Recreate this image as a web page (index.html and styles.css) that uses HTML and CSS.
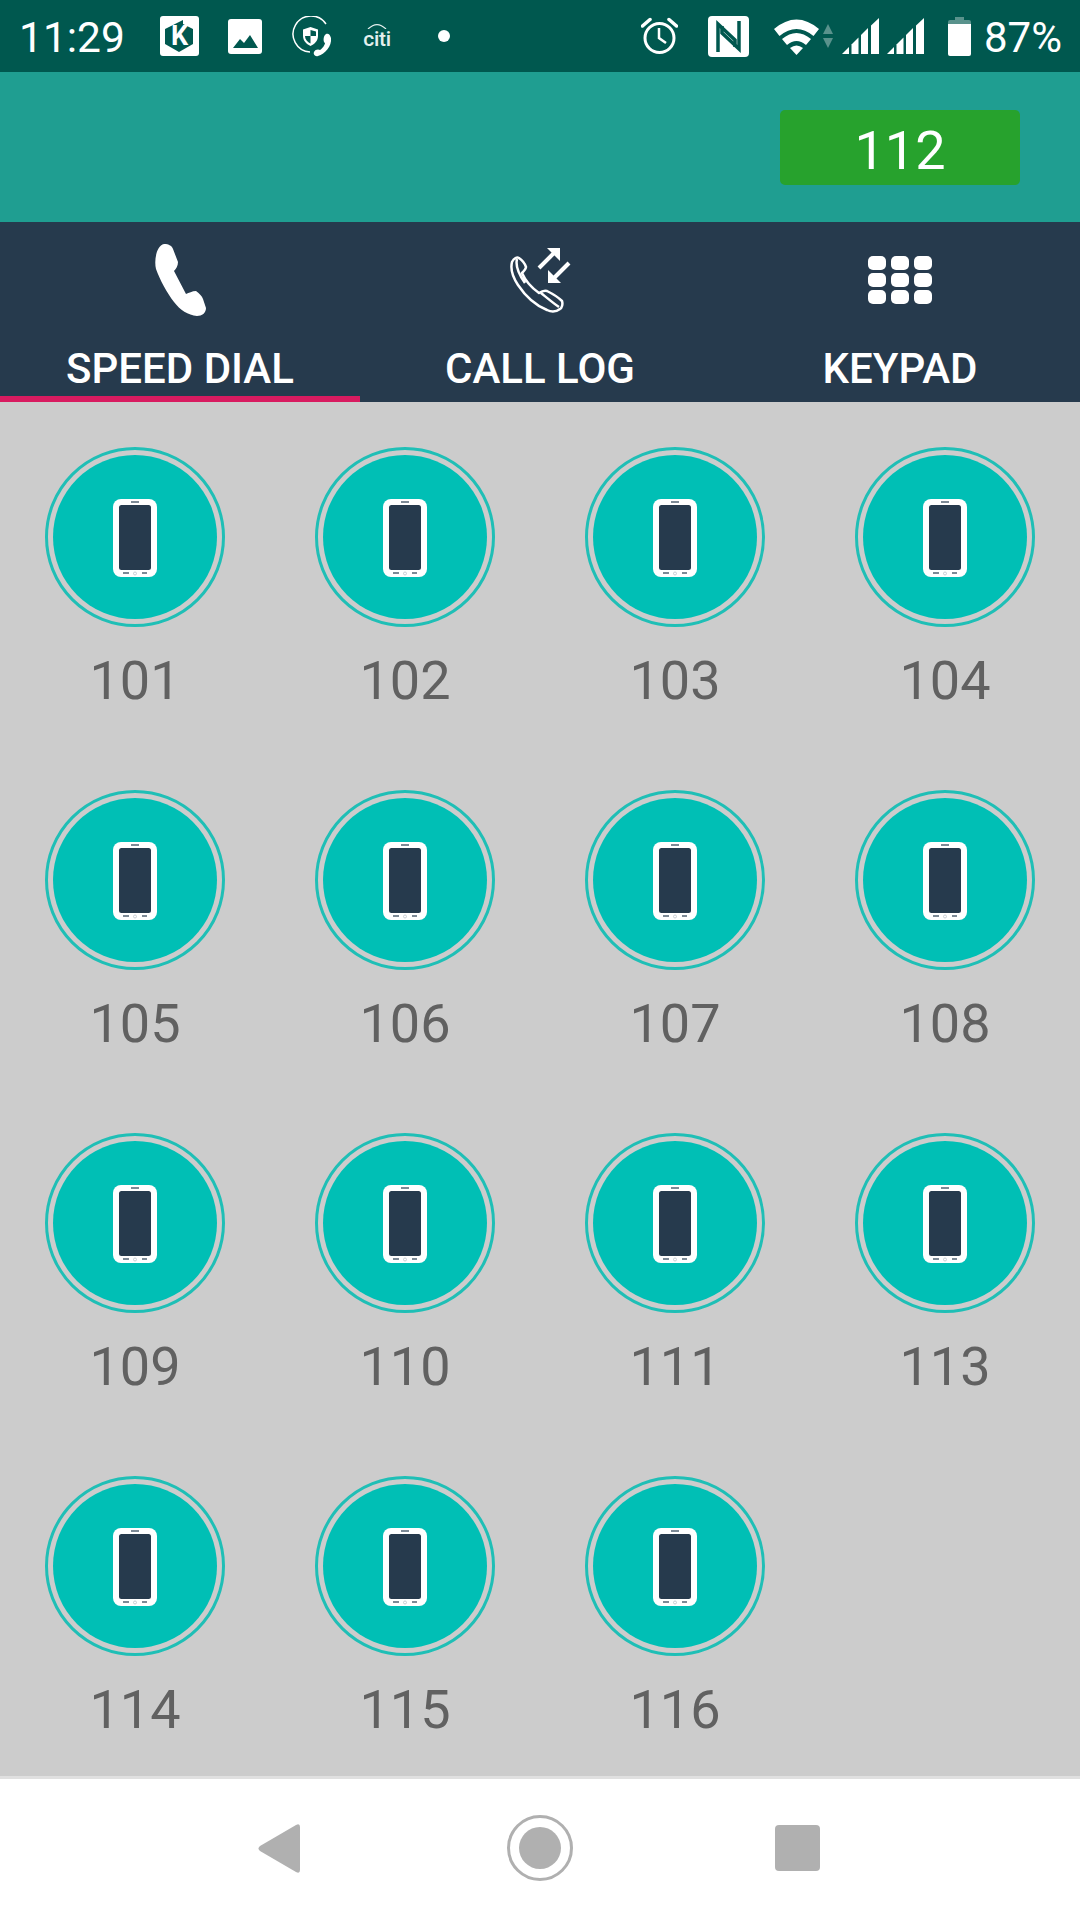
FILE: index.html
```html
<!DOCTYPE html>
<html>
<head>
  <meta charset="utf-8">
  <title>Speed Dial</title>
  <link rel="stylesheet" href="styles.css">
</head>
<body>
  <svg class="defs" width="0" height="0">
    <symbol id="handset" viewBox="0 0 44 78">
      <rect width="44" height="78" rx="8" fill="#fff"/>
      <rect x="6" y="6" width="32" height="65" rx="2.500" fill="#263a4d"/>
      <rect x="18" y="2" width="8" height="2" fill="#7d8a96"/>
      <rect x="10" y="73" width="6" height="2" fill="#7d8a96"/>
      <circle cx="22" cy="74.500" r="1.500" fill="none" stroke="#b5bcc4" stroke-width=".7"/>
      <rect x="29" y="73" width="5" height="2" fill="#7d8a96"/>
    </symbol>
    <symbol id="bars" viewBox="0 0 37 36">
      <polygon points="0,36 7,29 7,36" fill="#fff"/>
      <polygon points="9.500,26.500 16.500,19.500 16.500,36 9.500,36" fill="#fff"/>
      <polygon points="19,17 26,10 26,36 19,36" fill="#fff"/>
      <polygon points="29,7.500 37,0 37,36 29,36" fill="#fff"/>
    </symbol>
  </svg>

  <div class="status">
    <span class="time">11:29</span>
    <svg class="ic-k" width="39" height="40" viewBox="0 0 39 40">
      <rect width="39" height="40" rx="3" fill="#fff"/>
      <polygon points="23,4 23,8 33,13 33,28 19,36 5,28 5,13 15,8" fill="#00584f"/>
      <text x="19.500" y="29" class="k-letter">K</text>
    </svg>
    <svg class="ic-img" width="34" height="35" viewBox="0 0 34 35">
      <rect width="34" height="35" rx="3" fill="#fff"/>
      <polygon points="5,29 12,20 16,24 22,16 30,29" fill="#00584f"/>
    </svg>
    <svg class="ic-shield" width="41" height="41" viewBox="0 0 41 41">
      <path d="M18 36 A18 18 0 1 1 34 8" fill="none" stroke="#fff" stroke-width="1.500"/>
      <path d="M18.500 11 L26 13.500 V20 C26 25 22 28.500 18.500 30 C15 28.500 11 25 11 20 V13.500Z" fill="#fff"/>
      <path d="M18.500 14 L24 15.500 V20 H18.500Z M18.500 20 V27.500 C15.500 26 13 23.500 13 20Z" fill="#00584f"/>
      <path d="M34 18 C36 17 38 18 39 22 C40 30 33 38 26 40 C23 41 21 38 22 36 C23 33 27 33 28 34 C30 33 33 29 33 27 C31 26 31 20 34 18Z" fill="#fff"/>
    </svg>
    <div class="citi">
      <svg width="20" height="6" viewBox="0 0 20 6" class="citi-arc"><path d="M1 6 Q10 -3 19 6" fill="none" stroke="#e4f0ee" stroke-width="1.200"/></svg>
      <span>citi</span>
    </div>
    <span class="dot"></span>

    <svg class="ic-alarm" width="37" height="38" viewBox="0 0 37 38">
      <circle cx="18.500" cy="21" r="14.500" fill="none" stroke="#fff" stroke-width="3"/>
      <path d="M18 11 V21 L25 26" fill="none" stroke="#fff" stroke-width="2.500"/>
      <path d="M1.500 9 L9 2.500 M28 2.500 L35.500 9" stroke="#fff" stroke-width="3.500" stroke-linecap="round"/>
    </svg>
    <svg class="ic-nfc" width="41" height="41" viewBox="0 0 41 41">
      <rect width="41" height="41" rx="4" fill="#fff"/>
      <path d="M10 36 V8 L27 24 V31" fill="none" stroke="#00584f" stroke-width="3.500"/>
      <path d="M31 5 V33 L14 17 V10" fill="none" stroke="#00584f" stroke-width="3.500"/>
    </svg>
    <svg class="ic-wifi" width="45" height="37" viewBox="0 0 45 37">
      <path d="M0 11 Q22.500 -8 45 11 L39.500 18 Q22.500 4 5.500 18Z" fill="#fff"/>
      <path d="M8 21 Q22.500 9 37 21 L32 27 Q22.500 19 13 27Z" fill="#fff"/>
      <path d="M16 30 Q22.500 25 29 30 L22.500 37Z" fill="#fff"/>
    </svg>
    <svg class="ic-updown" width="10" height="24" viewBox="0 0 10 24">
      <polygon points="5,0 10,10 0,10" fill="#fff" fill-opacity=".35"/>
      <polygon points="0,14 10,14 5,24" fill="#fff" fill-opacity=".35"/>
    </svg>
    <svg class="ic-bars" width="37" height="36"><use href="#bars"/></svg>
    <svg class="ic-bars2" width="37" height="36"><use href="#bars"/></svg>
    <svg class="ic-batt" width="23" height="39" viewBox="0 0 23 39">
      <path d="M7 0 H16 V3 H21 Q23 3 23 5 V8 H0 V5 Q0 3 2 3 H7Z" fill="#fff" fill-opacity=".35"/>
      <path d="M0 7 H23 V37 Q23 39 21 39 H2 Q0 39 0 37Z" fill="#fff"/>
    </svg>
    <span class="pct">87%</span>
  </div>

  <div class="header">
    <div class="ext">112</div>
  </div>

  <div class="tabs">
    <div class="tab active">
      <div class="tab-icon">
        <svg width="51" height="72" viewBox="0 0 51 72">
          <path d="M9 0 C14 0 17 2 18 5 L23 18 C23 22 21 25 19 27 L31 50 C34 49 37 47 41 47 C44 49 47 52 48 55 L51 64 C51 69 47 72 42 72 C33 71 25 66 19 58 C12 49 5 36 1 25 C-1 17 1 2 9 0Z" fill="#fff"/>
        </svg>
      </div>
      <div class="tab-label">SPEED DIAL</div>
    </div>
    <div class="tab">
      <div class="tab-icon">
        <svg width="64" height="66" viewBox="19 16 64 66">
          <path d="M23 31 C25 27 28 26 30 27 C33 29 36 33 37 36 C37 38 35 40 33 42 C36 49 43 57 50 62 C53 60 55 59 58 60 C62 62 69 66 73 70 C74 73 73 77 71 78 C67 81 62 81 58 79 C48 75 37 66 29 54 C25 48 21 39 23 31Z M28 28 C26 36 31 45 36 52 M52 62 C57 66 64 72 70 76" fill="none" stroke="#fff" stroke-width="2.500" stroke-linejoin="round"/>
          <path d="M50 37 L66 21" stroke="#fff" stroke-width="4"/>
          <polygon points="58,17 71,17 71,30" fill="#fff"/>
          <path d="M80 32 L64 48" stroke="#fff" stroke-width="4"/>
          <polygon points="59,39 59,52 72,52" fill="#fff"/>
        </svg>
      </div>
      <div class="tab-label">CALL LOG</div>
    </div>
    <div class="tab">
      <div class="tab-icon">
        <div class="keys">
          <span></span><span></span><span></span>
          <span></span><span></span><span></span>
          <span></span><span></span><span></span>
        </div>
      </div>
      <div class="tab-label">KEYPAD</div>
    </div>
  </div>

  <div class="grid">
    <div class="item"><div class="dial"><svg width="44" height="78"><use href="#handset"/></svg></div><div class="num">101</div></div>
    <div class="item"><div class="dial"><svg width="44" height="78"><use href="#handset"/></svg></div><div class="num">102</div></div>
    <div class="item"><div class="dial"><svg width="44" height="78"><use href="#handset"/></svg></div><div class="num">103</div></div>
    <div class="item"><div class="dial"><svg width="44" height="78"><use href="#handset"/></svg></div><div class="num">104</div></div>
    <div class="item"><div class="dial"><svg width="44" height="78"><use href="#handset"/></svg></div><div class="num">105</div></div>
    <div class="item"><div class="dial"><svg width="44" height="78"><use href="#handset"/></svg></div><div class="num">106</div></div>
    <div class="item"><div class="dial"><svg width="44" height="78"><use href="#handset"/></svg></div><div class="num">107</div></div>
    <div class="item"><div class="dial"><svg width="44" height="78"><use href="#handset"/></svg></div><div class="num">108</div></div>
    <div class="item"><div class="dial"><svg width="44" height="78"><use href="#handset"/></svg></div><div class="num">109</div></div>
    <div class="item"><div class="dial"><svg width="44" height="78"><use href="#handset"/></svg></div><div class="num">110</div></div>
    <div class="item"><div class="dial"><svg width="44" height="78"><use href="#handset"/></svg></div><div class="num">111</div></div>
    <div class="item"><div class="dial"><svg width="44" height="78"><use href="#handset"/></svg></div><div class="num">113</div></div>
    <div class="item"><div class="dial"><svg width="44" height="78"><use href="#handset"/></svg></div><div class="num">114</div></div>
    <div class="item"><div class="dial"><svg width="44" height="78"><use href="#handset"/></svg></div><div class="num">115</div></div>
    <div class="item"><div class="dial"><svg width="44" height="78"><use href="#handset"/></svg></div><div class="num">116</div></div>
  </div>

  <div class="navbar">
    <svg class="nav-back" width="42" height="49" viewBox="0 0 42 49">
      <path d="M38 1 Q42 -1 42 3 V46 Q42 50 38 48 L2 27 Q-1 24.500 2 22Z" fill="#b0b0b0"/>
    </svg>
    <div class="nav-home"><span></span></div>
    <div class="nav-recent"></div>
  </div>
</body>
</html>
```

FILE: styles.css
```css
html, body { margin: 0; padding: 0; }
body { width: 1080px; height: 1920px; display: flex; flex-direction: column; overflow: hidden;
       font-family: Roboto, "Liberation Sans", sans-serif; background: #fff; }
.defs { position: absolute; }

/* status bar */
.status { height: 72px; flex: none; display: flex; align-items: center; padding-left: 19px;
          background: #00584f; color: #fff; }
.status svg { flex: none; display: block; }
.time { font-size: 42.500px; width: 141px; margin-top: 3px; }
.k-letter { font-family: Roboto, sans-serif; font-size: 27px; font-weight: 700; fill: #fff; text-anchor: middle; }
.ic-img { margin-left: 29px; }
.ic-shield { margin-left: 30px; }
.citi { margin-left: 30px; width: 28px; height: 24px; position: relative; text-align: center; }
.citi span { font-size: 21px; font-weight: 500; line-height: 30px; color: #e4f0ee; display: block; letter-spacing: -.3px; }
.citi-arc { position: absolute; left: 4px; top: -1px; }
.dot { width: 12px; height: 12px; border-radius: 50%; background: #fff; margin-left: 47px; }
.ic-alarm { margin-left: 191px; }
.ic-nfc { margin-left: 30px; }
.ic-wifi { margin-left: 25px; }
.ic-updown { margin-left: 4px; }
.ic-bars { margin-left: 9px; }
.ic-bars2 { margin-left: 8px; }
.ic-batt { margin-left: 24px; }
.pct { font-size: 42px; margin-left: 13px; margin-top: 2px; }

/* header */
.header { height: 150px; flex: none; background: #1f9e91; display: flex; justify-content: flex-end;
          align-items: flex-start; padding: 38px 60px 0 0; box-sizing: border-box; }
.ext { width: 240px; height: 75px; border-radius: 5px; background: #27a22d; color: #fff;
       font-size: 54px; line-height: 81px; text-align: center; }

/* tabs */
.tabs { height: 180px; flex: none; display: grid; grid-template-columns: repeat(3, 1fr); background: #263a4d; }
.tab { display: flex; flex-direction: column; align-items: center; box-sizing: border-box; border-bottom: 6px solid transparent; }
.tab.active { border-bottom-color: #d81b60; }
.tab-icon { height: 110px; display: flex; align-items: center; justify-content: center; padding-top: 5px; box-sizing: border-box; }
.tab-label { color: #fff; font-size: 42px; font-weight: 500; line-height: 46px; margin-top: 14px; }
.keys { display: grid; grid-template-columns: repeat(3, 18px); grid-auto-rows: 14px; gap: 3px 5px; }
.keys span { background: #fff; border-radius: 5px; }

/* speed dial grid */
.grid { flex: 1; min-height: 0; overflow: hidden; display: grid; grid-template-columns: repeat(4, 270px); grid-auto-rows: 343px;
        padding-top: 45px; box-sizing: border-box; background: #ccc; }
.item { display: flex; flex-direction: column; align-items: center; }
.dial { width: 180px; height: 180px; box-sizing: border-box; border: 3px solid #1fbfb6; padding: 5px;
        border-radius: 50%; background: #00bfb5; background-clip: content-box;
        display: flex; align-items: center; justify-content: center; }
.dial svg { display: block; margin-top: 2px; }
.num { font-size: 54px; line-height: 58px; margin-top: 25px; color: #616161; }

/* bottom nav */
.navbar { height: 144px; flex: none; box-sizing: border-box; border-top: 3px solid #e0e0e0; background: #fff;
          display: flex; align-items: center; padding: 0 0 3px 258px; }
.nav-home { width: 66px; height: 66px; box-sizing: border-box; border: 3px solid #b0b0b0; border-radius: 50%;
            margin-left: 207px; display: flex; align-items: center; justify-content: center; }
.nav-home span { width: 42px; height: 42px; border-radius: 50%; background: #b0b0b0; }
.nav-recent { width: 45px; height: 46px; border-radius: 4px; background: #b0b0b0; margin-left: 202px; }
```
